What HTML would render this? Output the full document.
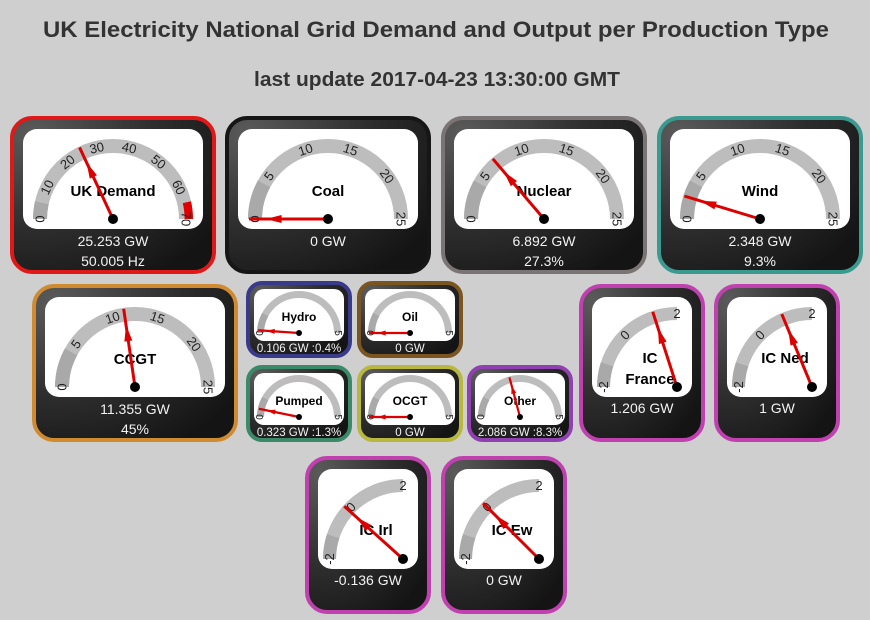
<!DOCTYPE html>
<html><head><meta charset="utf-8"><style>
html,body{margin:0;padding:0;background:#cfcfcf;width:870px;height:620px;overflow:hidden}
svg{display:block}
text{font-family:"Liberation Sans",Arial,sans-serif}
</style></head><body>
<svg id="s" width="870" height="620" xmlns="http://www.w3.org/2000/svg">
<defs>
<radialGradient id="bg" cx="0.1" cy="0.1" r="1.1">
<stop offset="0" stop-color="#5a5a5a"/><stop offset="0.55" stop-color="#2e2e2e"/><stop offset="1" stop-color="#141414"/>
</radialGradient>
</defs>
<text x="436" y="37" text-anchor="middle" font-size="22" font-weight="bold" fill="#333" textLength="786" lengthAdjust="spacingAndGlyphs">UK Electricity National Grid Demand and Output per Production Type</text>
<text x="437" y="86" text-anchor="middle" font-size="20" font-weight="bold" fill="#333" textLength="366" lengthAdjust="spacingAndGlyphs">last update 2017-04-23 13:30:00 GMT</text>
</svg>
<script>
var S=document.getElementById('s'),NS='http://www.w3.org/2000/svg',cid=0;
function el(t,a,p,txt){var e=document.createElementNS(NS,t);for(var k in a)e.setAttribute(k,a[k]);if(txt!==undefined)e.textContent=txt;(p||S).appendChild(e);return e;}
function pt(cx,cy,r,a){a=a*Math.PI/180;return [cx+r*Math.cos(a),cy-r*Math.sin(a)];}
function arc(g,cx,cy,r,w,a1,a2,col){var p1=pt(cx,cy,r-w/2,a1),p2=pt(cx,cy,r-w/2,a2);
el('path',{d:'M'+p1[0]+' '+p1[1]+' A'+(r-w/2)+' '+(r-w/2)+' 0 0 1 '+p2[0]+' '+p2[1],stroke:col,'stroke-width':w,fill:'none'},g);}
function box(o){
 var g=el('g',{});
 el('rect',{x:o.x+2,y:o.y+2,width:o.w-4,height:o.h-4,rx:o.rad||20,fill:'url(#bg)',stroke:o.bc,'stroke-width':4},g);
 var fx=o.x+o.fo,fy=o.y+o.fo;
 var cp='c'+(cid++);var d=el('clipPath',{id:cp},g);el('rect',{x:fx,y:fy,width:o.fw,height:o.fh,rx:o.fr},d);
 el('rect',{x:fx,y:fy,width:o.fw,height:o.fh,rx:o.fr,fill:'#fff'},g);
 var f=el('g',{'clip-path':'url(#'+cp+')'},g);
 var cx=fx+o.cx,cy=fy+o.cy,R=o.r,W=o.bw,A1=o.a1,A2=o.a2;
 function ang(v){return A1+(A2-A1)*(v-o.min)/(o.max-o.min);}
 arc(f,cx,cy,R,W,A1,A2,'#bdbdbd');
 if(o.dark)arc(f,cx,cy,R,W,A1,ang(o.dark),'#a9a9a9');
 if(o.red){arc(f,cx,cy,R,W*0.6,ang(o.red),A2,'#e00000');}
 o.labels.forEach(function(v){var a=ang(v),p=pt(cx,cy,R-W/2,a);
  el('text',{x:p[0],y:p[1],'font-size':o.lf,'text-anchor':'middle','dominant-baseline':'central',fill:'#222',transform:'rotate('+(90-a)+' '+p[0]+' '+p[1]+')'},f,String(v));});
 o.name.forEach(function(n,i){el('text',{x:fx+o.nx,y:fy+o.ny+i*21,'font-size':o.nf,'font-weight':'bold','text-anchor':'middle',fill:'#000'},f,n);});
 var a=ang(o.v),tip=pt(cx,cy,R-1,a),ah=pt(cx,cy,R*0.58,a),hw=o.r>60?4:2.5;
 el('line',{x1:cx,y1:cy,x2:tip[0],y2:tip[1],stroke:'#d00','stroke-width':o.r>60?3:2.2},f);
 var q=pt(cx,cy,R*0.78,a),pa=(a+90)*Math.PI/180;
 el('path',{d:'M'+q[0]+' '+q[1]+' L'+(ah[0]+hw*Math.cos(pa))+' '+(ah[1]-hw*Math.sin(pa))+' L'+(ah[0]-hw*Math.cos(pa))+' '+(ah[1]+hw*Math.sin(pa))+'Z',fill:'#d00'},f);
 el('circle',{cx:cx,cy:cy,r:o.r>60?5:3,fill:'#000'},f);
 o.vals.forEach(function(t,i){el('text',{x:o.x+o.w/2,y:o.vy+i*20,'font-size':o.vf,'text-anchor':'middle',fill:'#f2f2f2'},g,t);});
}
function big(x,y,bc,name,min,max,step,v,vals,extra){var L=[];for(var i=min;i<=max;i+=step)L.push(i);
 var o={x:x,y:y,w:206,h:158,bc:bc,fo:13,fw:180,fh:100,fr:14,cx:90,cy:90,r:80,bw:14,a1:180,a2:0,min:min,max:max,labels:L,lf:13,name:[name],nx:90,ny:67,nf:15,v:v,vals:vals,vy:y+130,vf:14,dark:(max-min)*0.16+min};
 for(var k in extra)o[k]=extra[k];box(o);}
big(10,116,'#e01818','UK Demand',0,70,10,25.253,['25.253 GW','50.005 Hz'],{red:65,dark:5});
big(225,116,'#161616','Coal',0,25,5,0,['0 GW']);
big(441,116,'#7a7474','Nuclear',0,25,5,6.892,['6.892 GW','27.3%']);
big(657,116,'#3a9a90','Wind',0,25,5,2.348,['2.348 GW','9.3%']);
big(32,284,'#d08a30','CCGT',0,25,5,11.355,['11.355 GW','45%']);
function small(x,y,bc,name,v,txt){box({x:x,y:y,w:106,h:77,bc:bc,rad:14,fo:8,fw:90,fh:52,fr:10,cx:45,cy:44,r:42,bw:7,a1:180,a2:0,min:0,max:5,labels:[0,5],lf:10,name:[name],nx:45,ny:32,nf:12,v:v,vals:[txt],vy:y+71,vf:11.5,dark:0.8});}
small(246,281,'#3a3a8a','Hydro',0.106,'0.106 GW :0.4%');
small(357,281,'#7a5520','Oil',0,'0 GW');
small(246,365,'#3a8a6a','Pumped',0.323,'0.323 GW :1.3%');
small(357,365,'#b8b840','OCGT',0,'0 GW');
small(467,365,'#9040b0','Other',2.086,'2.086 GW :8.3%');
function ic(x,y,name,v,txt){box({x:x,y:y,w:126,h:158,bc:'#c040b0',rad:20,fo:13,fw:100,fh:100,fr:14,cx:85,cy:90,r:80,bw:13,a1:180,a2:90,min:-2,max:2,labels:[-2,0,2],lf:13,name:name,nx:58,ny:name.length>1?66:66,nf:15,v:v,vals:[txt],vy:y+129,vf:14,dark:-1.2});}
ic(579,284,['IC','France'],1.206,'1.206 GW');
ic(714,284,['IC Ned'],1,'1 GW');
ic(305,456,['IC Irl'],-0.136,'-0.136 GW');
ic(441,456,['IC Ew'],0,'0 GW');
</script>
</body></html>
